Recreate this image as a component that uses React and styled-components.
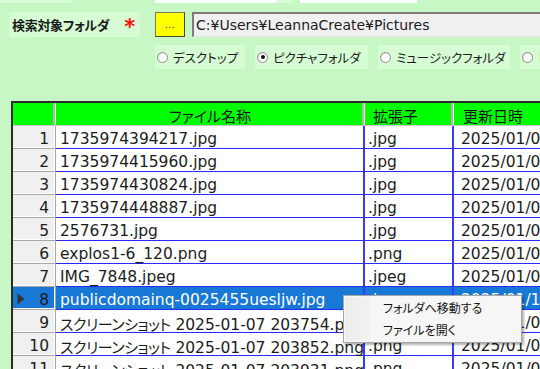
import React from "react";
import styled, { createGlobalStyle } from "styled-components";

const GlobalStyle = createGlobalStyle`
  html, body {
    margin: 0;
    padding: 0;
    overflow: hidden;
    background: #c7f7c5;
  }
`;

const files = [
  { name: "1735974394217.jpg", ext: ".jpg", date: "2025/01/07 12:46" },
  { name: "1735974415960.jpg", ext: ".jpg", date: "2025/01/07 12:46" },
  { name: "1735974430824.jpg", ext: ".jpg", date: "2025/01/07 12:47" },
  { name: "1735974448887.jpg", ext: ".jpg", date: "2025/01/07 12:47" },
  { name: "2576731.jpg", ext: ".jpg", date: "2025/01/07 20:31" },
  { name: "explos1-6_120.png", ext: ".png", date: "2025/01/07 20:35" },
  { name: "IMG_7848.jpeg", ext: ".jpeg", date: "2025/01/07 20:36" },
  { name: "publicdomainq-0025455uesljw.jpg", ext: ".jpg", date: "2025/01/10 09:12" },
  { name: "スクリーンショット 2025-01-07 203754.png", ext: ".png", date: "2025/01/07 20:37" },
  { name: "スクリーンショット 2025-01-07 203852.png", ext: ".png", date: "2025/01/07 20:38" },
  { name: "スクリーンショット 2025-01-07 203931.png", ext: ".png", date: "2025/01/07 20:39" },
];

const selectedIndex = 7;

const radios = [
  { label: "デスクトップ", width: 90, checked: false },
  { label: "ピクチャフォルダ", width: 113, checked: true },
  { label: "ミュージックフォルダ", width: 132, checked: false },
  { label: "ビデオフォルダ", width: 110, checked: false },
];

// split a file name into japanese / latin runs so the kana can be set a bit tighter
const splitRuns = (text) => text.split(/([\u3000-\u30ff\u4e00-\u9fff]+)/).filter(Boolean);

function FileName({ text }) {
  return splitRuns(text).map((run, i) =>
    /[\u3000-\u30ff\u4e00-\u9fff]/.test(run) ? <Kana key={i}>{run}</Kana> : <span key={i}>{run}</span>
  );
}

function App() {
  return (
    <Page>
      <GlobalStyle />
      <TopStrip>
        <StripPiece $w={73} $bg="#d6fcd4" />
        <StripPiece $w={82} $bg="transparent" />
        <StripPiece $w={122} $bg="#ffffff" />
        <StripPiece $w={16} $bg="#d6fcd4" />
        <StripPiece $w={7} $bg="transparent" />
        <StripPiece $w={117} $bg="#ffffff" />
      </TopStrip>

      <SearchRow>
        <LabelPanel>
          <LabelText>検索対象フォルダ</LabelText>
          <Required>*</Required>
        </LabelPanel>
        <BrowseButton>...</BrowseButton>
        <PathBox>C:¥Users¥LeannaCreate¥Pictures</PathBox>
      </SearchRow>

      <RadioRow>
        {radios.map((r) => (
          <RadioItem key={r.label} $w={r.width}>
            <RadioCircle $checked={r.checked} />
            <RadioLabel>{r.label}</RadioLabel>
          </RadioItem>
        ))}
      </RadioRow>

      <Grid>
        <HeaderRow>
          <HeaderCell />
          <HeaderCell $align="center">ファイル名称</HeaderCell>
          <HeaderCell $pad={8}>拡張子</HeaderCell>
          <HeaderCell $pad={9}>更新日時</HeaderCell>
        </HeaderRow>
        {files.map((f, i) => {
          const sel = i === selectedIndex;
          return (
            <DataRow key={i} $z={files.length - i}>
              <RowHeader $selected={sel}>
                {sel && (
                  <Pointer viewBox="0 0 8 12" width="8" height="12">
                    <polygon points="0.5,0.5 7.5,6 0.5,11.5" fill="#333" />
                  </Pointer>
                )}
                {i + 1}
              </RowHeader>
              <Cell $selected={sel} $pad={4}>
                <FileName text={f.name} />
              </Cell>
              <Cell $selected={sel} $pad={3}>{f.ext}</Cell>
              <Cell $selected={sel} $pad={7} $last>{f.date}</Cell>
            </DataRow>
          );
        })}
      </Grid>

      <ContextMenu>
        <Gutter />
        <MenuItem>フォルダへ移動する</MenuItem>
        <MenuItem>ファイルを開く</MenuItem>
      </ContextMenu>
    </Page>
  );
}

const Page = styled.div`
  position: relative;
  width: 540px;
  height: 369px;
  overflow: hidden;
  background: #c7f7c5;
  font-family: "DejaVu Sans", "Noto Sans CJK JP", sans-serif;
  font-feature-settings: "palt";
  color: #1c1c1c;
`;

const TopStrip = styled.div`
  display: flex;
  height: 3px;
`;

const StripPiece = styled.div`
  width: ${(p) => p.$w}px;
  background: ${(p) => p.$bg};
`;

const SearchRow = styled.div`
  display: flex;
  align-items: stretch;
  height: 25px;
  margin-top: 9px;
  padding-left: 9px;
`;

const LabelPanel = styled.div`
  flex: none;
  display: flex;
  align-items: center;
  width: 131px;
  padding-left: 3px;
  box-sizing: border-box;
  background: #d6fcd4;
  white-space: nowrap;
`;

const LabelText = styled.span`
  flex: none;
  font-family: "Noto Sans CJK JP", sans-serif;
  font-size: 13px;
  font-weight: 700;
  letter-spacing: -0.3px;
  color: #1a1a1a;
`;

const Required = styled.span`
  flex: none;
  margin-left: 15px;
  font-family: "DejaVu Sans", sans-serif;
  font-size: 21px;
  font-weight: 700;
  color: #ff1010;
  line-height: 1;
  padding-top: 6px;
`;

const BrowseButton = styled.div`
  flex: none;
  width: 30px;
  margin-left: 15px;
  box-sizing: border-box;
  background: #ffff00;
  border: 1px solid #7a7a50;
  border-right-color: #4a4a30;
  border-bottom-color: #4a4a30;
  display: flex;
  align-items: flex-end;
  justify-content: center;
  padding-bottom: 6px;
  font-family: "DejaVu Sans", sans-serif;
  font-size: 9px;
  line-height: 1;
  letter-spacing: 0.5px;
  color: #202020;
`;

const PathBox = styled.div`
  flex: 1;
  margin-left: 7px;
  min-width: 400px;
  box-sizing: border-box;
  background: #f0f0f0;
  border-top: 2px solid #7c7c7c;
  border-left: 2px solid #7c7c7c;
  border-bottom: 1px solid #e4e4e4;
  display: flex;
  align-items: center;
  padding-left: 2px;
  font-family: "DejaVu Sans", sans-serif;
  font-size: 14px;
  color: #1c1c1c;
  white-space: nowrap;
`;

const RadioRow = styled.div`
  display: flex;
  gap: 10px;
  height: 24px;
  margin-top: 8px;
  padding-left: 155px;
`;

const RadioItem = styled.div`
  flex: none;
  width: ${(p) => p.$w}px;
  display: flex;
  align-items: center;
  gap: 5px;
  padding-left: 2px;
  box-sizing: border-box;
  background: #d6fcd4;
`;

const RadioCircle = styled.span`
  position: relative;
  flex: none;
  width: 11px;
  height: 11px;
  box-sizing: border-box;
  border-radius: 50%;
  border: 1px solid #8c8c8c;
  background: radial-gradient(circle at 65% 65%, #ffffff 40%, #d8d8d8 100%);

  &::after {
    content: "";
    display: ${(p) => (p.$checked ? "block" : "none")};
    position: absolute;
    left: 2.5px;
    top: 2.5px;
    width: 4px;
    height: 4px;
    border-radius: 50%;
    background: #111;
  }
`;

const RadioLabel = styled.span`
  font-family: "Noto Sans CJK JP", sans-serif;
  font-size: 12.5px;
  color: #1c1c1c;
  white-space: nowrap;
`;

const Grid = styled.div`
  width: 640px;
  margin-top: 32px;
  margin-left: 11px;
  border-top: 2px solid #2a2a2a;
  border-left: 2px solid #2a2a2a;
  background: #ffffff;
`;

const columns = "43px 309px 89px 1fr";

const HeaderRow = styled.div`
  display: grid;
  grid-template-columns: ${columns};
  height: 23px;
  background: #00ff00;
  border-bottom: 1px solid #c8c8c8;
  box-sizing: border-box;
`;

const HeaderCell = styled.div`
  display: flex;
  align-items: center;
  justify-content: ${(p) => (p.$align === "center" ? "center" : "flex-start")};
  padding-left: ${(p) => p.$pad || 0}px;
  padding-top: 2px;
  border-right: 1px solid #ffffff;
  box-shadow: inset -2px 0 0 #b4b4b4;
  font-family: "Noto Sans CJK JP", sans-serif;
  font-size: 15px;
  color: #111;
  white-space: nowrap;
  overflow: hidden;
`;

/* earlier rows sit above later ones so descenders can spill onto the grid line */
const DataRow = styled.div`
  position: relative;
  z-index: ${(p) => p.$z};
  display: grid;
  grid-template-columns: ${columns};
  height: 23px;
`;

const RowHeader = styled.div`
  position: relative;
  box-sizing: border-box;
  height: 23px;
  padding: 6px 6px 0 0;
  line-height: 15px;
  text-align: right;
  font-size: 15.5px;
  color: #1c1c1c;
  background: ${(p) => (p.$selected ? "#1778d6" : "#f0f0f0")};
  border-bottom: 1px solid #a8a8a8;
  border-right: 1px solid #a8a8a8;
  box-shadow: inset -1px -1px 0 #ffffff;
`;

const Pointer = styled.svg`
  position: absolute;
  left: 4px;
  top: 6px;
`;

const Cell = styled.div`
  box-sizing: border-box;
  height: 23px;
  padding: 6px 0 0 ${(p) => p.$pad}px;
  line-height: 15px;
  font-size: 15.5px;
  white-space: nowrap;
  clip-path: inset(-6px 0 -6px 0);
  color: ${(p) => (p.$selected ? "#ffffff" : "#1c1c1c")};
  background: ${(p) => (p.$selected ? "#1778d6" : "#ffffff")};
  border-bottom: 1px solid #2a2aff;
  border-right: ${(p) => (p.$last ? "none" : "2px solid #3a3aff")};
`;

const Kana = styled.span`
  font-family: "Noto Sans CJK JP", sans-serif;
  font-size: 15px;
  letter-spacing: -0.5px;
`;

const ContextMenu = styled.div`
  position: absolute;
  z-index: 50;
  left: 343px;
  top: 295px;
  width: 179px;
  height: 48px;
  box-sizing: border-box;
  padding: 0;
  background: #f6f6f6;
  border: 1px solid #a6a6a6;
  box-shadow: 2px 2px 2px rgba(0, 0, 0, 0.3);
`;

const Gutter = styled.div`
  position: absolute;
  left: 1px;
  top: 1px;
  bottom: 1px;
  width: 26px;
  background: linear-gradient(to right, #ececec, #f2f2f2);
  border-right: 1px solid #ffffff;
`;

const MenuItem = styled.div`
  position: relative;
  height: 22px;
  padding-left: 39px;
  display: flex;
  align-items: center;
  font-family: "Noto Sans CJK JP", sans-serif;
  font-size: 12px;
  color: #141414;
  white-space: nowrap;
`;

export default App;
